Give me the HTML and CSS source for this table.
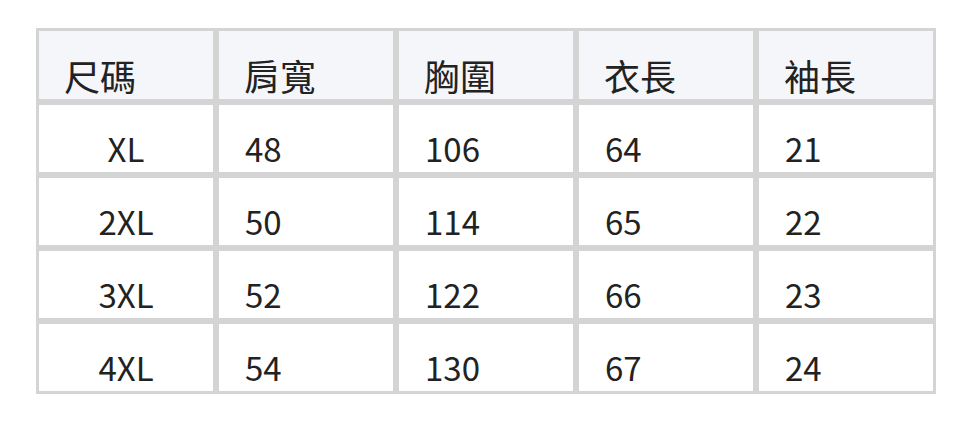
FILE: index.html
```html
<!DOCTYPE html>
<html lang="zh-Hant">
<head>
<meta charset="utf-8">
<title>尺碼表</title>
<link rel="stylesheet" href="styles.css">
</head>
<body>
<div class="size-table">
  <div class="cell head">尺碼</div>
  <div class="cell head">肩寬</div>
  <div class="cell head">胸圍</div>
  <div class="cell head">衣長</div>
  <div class="cell head">袖長</div>

  <div class="cell size">XL</div>
  <div class="cell">48</div>
  <div class="cell">106</div>
  <div class="cell">64</div>
  <div class="cell">21</div>

  <div class="cell size">2XL</div>
  <div class="cell">50</div>
  <div class="cell">114</div>
  <div class="cell">65</div>
  <div class="cell">22</div>

  <div class="cell size">3XL</div>
  <div class="cell">52</div>
  <div class="cell">122</div>
  <div class="cell">66</div>
  <div class="cell">23</div>

  <div class="cell size">4XL</div>
  <div class="cell">54</div>
  <div class="cell">130</div>
  <div class="cell">67</div>
  <div class="cell">24</div>
</div>
</body>
</html>
```

FILE: styles.css
```css
html, body {
  margin: 0;
  padding: 0;
  background: #ffffff;
}
body {
  padding: 28px 36px;
  font-family: "Noto Sans CJK TC", "Noto Sans CJK SC", "Noto Sans", sans-serif;
  color: #222222;
}
.size-table {
  display: grid;
  grid-template-columns: repeat(5, 180px);
  grid-template-rows: 74px repeat(4, 73px);
  width: 900px;
}
.cell {
  box-sizing: border-box;
  border: 3px solid #d4d4d4;
  font-size: 33px;
  line-height: 48px;
  padding: 19px 0 0 26px;
  white-space: nowrap;
}
.head {
  background: #f5f6fa;
  font-size: 36px;
  padding-top: 20px;
  padding-left: 25px;
}
.size {
  text-align: center;
  padding-left: 0;
}
```
